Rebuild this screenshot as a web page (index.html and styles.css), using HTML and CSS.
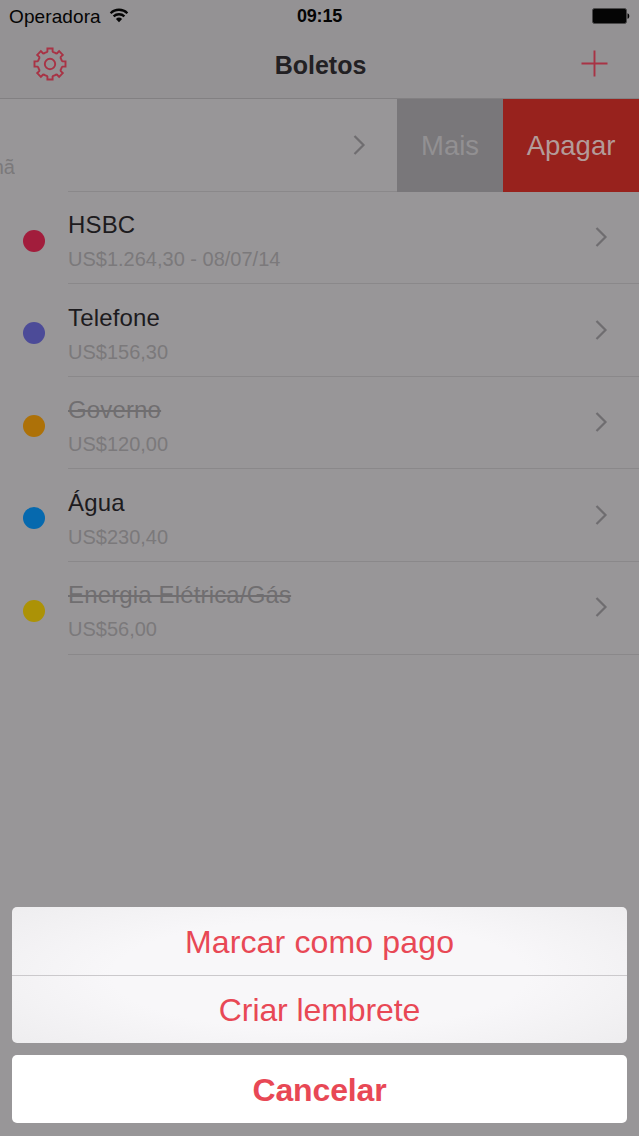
FILE: index.html
```html
<!DOCTYPE html>
<html lang="pt-BR">
<head>
    <meta charset="UTF-8">
    <meta name="viewport" content="width=device-width, initial-scale=1.0">
    <title>Boletos</title>
    <link rel="stylesheet" href="styles.css">
</head>
<body>

    <div class="screen">
        <header class="header">
            <div class="status-bar">
                <div class="carrier">
                    <span>Operadora</span>
                    <svg class="wifi" width="20" height="15" viewBox="0 0 20 15">
                        <path d="M1.6 5.2a12 12 0 0 1 16.8 0M4.6 8.4a7.8 7.8 0 0 1 10.8 0" fill="none" stroke="#050505" stroke-width="2.3"/>
                        <path d="M10 14.2L6.9 11a4.5 4.5 0 0 1 6.2 0z" fill="#050505"/>
                    </svg>
                </div>
                <span class="clock">09:15</span>
                <svg class="battery" width="38" height="16" viewBox="0 0 38 16">
                    <rect x=".5" y=".5" width="34" height="15" rx="2" fill="#050505" stroke="#4a494a"/>
                    <path d="M35.5 5.2c2.4.6 2.4 5 0 5.6z" fill="#050505"/>
                </svg>
            </div>
            <div class="nav-bar">
                <svg class="gear" width="34" height="34" viewBox="-17 -17 34 34">
                    <path d="M-3.2-11.8L-2.6-12.6V-15.5H2.6V-12.6L3.2-11.8A12.2 12.2 0 0 1 6.08-10.6L7.07-10.75L9.12-12.8L12.8-9.12L10.75-7.07L10.6-6.08A12.2 12.2 0 0 1 11.8-3.2L12.6-2.6H15.5V2.6H12.6L11.8 3.2A12.2 12.2 0 0 1 10.6 6.08L10.75 7.07L12.8 9.12L9.12 12.8L7.07 10.75L6.08 10.6A12.2 12.2 0 0 1 3.2 11.8L2.6 12.6V15.5H-2.6V12.6L-3.2 11.8A12.2 12.2 0 0 1-6.08 10.6L-7.07 10.75L-9.12 12.8L-12.8 9.12L-10.75 7.07L-10.6 6.08A12.2 12.2 0 0 1-11.8 3.2L-12.6 2.6H-15.5V-2.6H-12.6L-11.8-3.2A12.2 12.2 0 0 1-10.6-6.08L-10.75-7.07L-12.8-9.12L-9.12-12.8L-7.07-10.75L-6.08-10.6A12.2 12.2 0 0 1-3.2-11.8Z"/>
                    <circle r="5.2"/>
                </svg>
                <h1>Boletos</h1>
                <svg class="plus" width="27" height="27" viewBox="0 0 27 27">
                    <path d="M13.5 0.5V26.5M0.5 13.5H26.5"/>
                </svg>
            </div>
        </header>

        <main class="list">
            <div class="row swiped">
                <div class="swiped-content">
                    <div class="swiped-detail"><span class="detail">Amanhã</span></div>
                    <div class="row-body">
                        <svg class="chevron" width="13" height="20" viewBox="0 0 13 20"><path d="M1.5 1L10.5 10L1.5 19"/></svg>
                    </div>
                </div>
                <div class="swipe-button more">Mais</div>
                <div class="swipe-button delete">Apagar</div>
            </div>

            <div class="row">
                <span class="dot red"></span>
                <div class="row-body">
                    <div>
                        <p class="name">HSBC</p>
                        <p class="detail">US$1.264,30 - 08/07/14</p>
                    </div>
                    <svg class="chevron" width="13" height="20" viewBox="0 0 13 20"><path d="M1.5 1L10.5 10L1.5 19"/></svg>
                </div>
            </div>

            <div class="row">
                <span class="dot purple"></span>
                <div class="row-body">
                    <div>
                        <p class="name">Telefone</p>
                        <p class="detail">US$156,30</p>
                    </div>
                    <svg class="chevron" width="13" height="20" viewBox="0 0 13 20"><path d="M1.5 1L10.5 10L1.5 19"/></svg>
                </div>
            </div>

            <div class="row">
                <span class="dot orange"></span>
                <div class="row-body">
                    <div>
                        <p class="name paid">Governo</p>
                        <p class="detail">US$120,00</p>
                    </div>
                    <svg class="chevron" width="13" height="20" viewBox="0 0 13 20"><path d="M1.5 1L10.5 10L1.5 19"/></svg>
                </div>
            </div>

            <div class="row">
                <span class="dot blue"></span>
                <div class="row-body">
                    <div>
                        <p class="name">Água</p>
                        <p class="detail">US$230,40</p>
                    </div>
                    <svg class="chevron" width="13" height="20" viewBox="0 0 13 20"><path d="M1.5 1L10.5 10L1.5 19"/></svg>
                </div>
            </div>

            <div class="row">
                <span class="dot yellow"></span>
                <div class="row-body">
                    <div>
                        <p class="name paid">Energia Elétrica/Gás</p>
                        <p class="detail">US$56,00</p>
                    </div>
                    <svg class="chevron" width="13" height="20" viewBox="0 0 13 20"><path d="M1.5 1L10.5 10L1.5 19"/></svg>
                </div>
            </div>
        </main>

        <div class="action-sheet">
            <div class="action-group">
                <button class="action mark">Marcar como pago</button>
                <button class="action remind">Criar lembrete</button>
            </div>
            <button class="action cancel">Cancelar</button>
        </div>
    </div>

</body>
</html>
```
FILE: styles.css
```css
* {
    box-sizing: border-box;
}

body {
    margin: 0;
    font-family: "Liberation Sans", Arial, sans-serif;
    background-color: #989698;
}

h1, p {
    margin: 0;
}

svg {
    display: block;
    flex: none;
}

.screen {
    display: flex;
    flex-direction: column;
    height: 1136px;
    overflow: hidden;
}

/* Header */
.header {
    height: 99px;
    background-color: #949294;
    border-bottom: 1px solid #828082;
}

.status-bar {
    display: grid;
    grid-template-columns: 1fr auto 1fr;
    align-items: center;
    height: 32px;
    padding: 1px 9px 0 9px;
    color: #050505;
}

.carrier {
    display: flex;
    align-items: center;
    gap: 8px;
    font-size: 19px;
    letter-spacing: 0.1px;
}

.wifi {
    margin-top: -2px;
}

.clock {
    font-size: 18px;
    font-weight: bold;
    letter-spacing: -0.2px;
}

.battery {
    justify-self: end;
    margin-top: -1px;
}

.nav-bar {
    display: grid;
    grid-template-columns: 1fr auto 1fr;
    align-items: center;
    height: 63px;
    padding: 0 31px 0 33px;
}

.nav-bar h1 {
    font-size: 25px;
    color: #222023;
    padding-top: 4px;
}

.gear, .plus {
    fill: none;
    stroke: #a83345;
    stroke-width: 1.9;
}

.plus {
    justify-self: end;
}

/* List */
.row {
    display: flex;
    height: 92.6px;
}

.dot {
    flex: none;
    width: 22px;
    height: 22px;
    margin: 38px 23px 0 23px;
    border-radius: 50%;
}

.red { background-color: #a21d3c; }
.purple { background-color: #4c4b98; }
.orange { background-color: #ad7108; }
.blue { background-color: #0669ae; }
.yellow { background-color: #ac9206; }

.row-body {
    display: flex;
    justify-content: space-between;
    flex: 1;
    padding: 19.5px 31px 0 0;
    border-bottom: 1px solid #8a888a;
}

.name {
    font-size: 24px;
    line-height: 28px;
    letter-spacing: 0.15px;
    color: #1d1b1e;
}

.paid {
    color: #706e70;
    text-decoration: line-through;
    text-decoration-thickness: 2px;
}

.detail {
    margin-top: 8px;
    font-size: 20px;
    line-height: 24px;
    color: #7b797b;
}

.chevron {
    margin-top: 16px;
    fill: none;
    stroke: #6f6d70;
    stroke-width: 2.2;
}

.swiped-content {
    display: flex;
    width: 397px;
}

/* the row is dragged left, only the end of its text is left on screen */
.swiped-detail {
    display: flex;
    justify-content: flex-end;
    width: 15px;
    height: 80px;
    margin-right: 53px;
    padding-top: 48px;
    overflow: hidden;
}

.swiped .row-body {
    justify-content: flex-end;
}

.swipe-button {
    display: flex;
    align-items: center;
    justify-content: center;
    padding-top: 1px;
    font-size: 27.5px;
}

.more {
    width: 106px;
    background-color: #79777a;
    color: #929092;
}

.delete {
    width: 136px;
    background-color: #98221d;
    color: #b39b99;
}

/* Action sheet */
.action-sheet {
    display: flex;
    flex-direction: column;
    gap: 12px;
    margin: auto 12px 13px;
}

.action-group {
    border-radius: 5px;
    overflow: hidden;
    background: radial-gradient(ellipse 75% 90% at 50% 50%, #f8f7f9 45%, #ebeaec 100%);
}

.action {
    display: block;
    width: 100%;
    height: 68px;
    padding: 2px 0 0;
    border: none;
    background: none;
    font-family: inherit;
    font-size: 32px;
    color: #e84855;
}

.mark {
    height: 69px;
    padding-top: 3px;
    border-bottom: 1px solid #cbc9cc;
    letter-spacing: 0.15px;
}

.remind {
    height: 67px;
    letter-spacing: -0.1px;
}

.cancel {
    border-radius: 5px;
    background-color: #fff;
    font-weight: bold;
    letter-spacing: -0.15px;
}
```
